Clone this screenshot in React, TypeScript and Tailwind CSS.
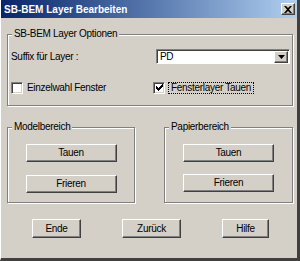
import React from 'react';

const raised =
    'border border-t-white border-l-white border-r-[#404040] border-b-[#404040] shadow-[inset_-1px_-1px_0_#808080,inset_1px_1px_0_#d4d0c8] bg-[#d4d0c8]';

function WinButton({ label, className }: { label: string; className: string }) {
    return (
        <button className={`${raised} ${className} flex items-center justify-center text-black leading-none`}>
            {label}
        </button>
    );
}

function CheckBox({ checked }: { checked?: boolean }) {
    return (
        <span className="w-[12px] h-[12px] bg-white border border-t-[#808080] border-l-[#808080] border-b-white border-r-white shadow-[inset_1px_1px_0_#404040,inset_-1px_-1px_0_#d4d0c8] flex items-center justify-center shrink-0">
            {checked && (
                <svg width="7" height="7" viewBox="0 0 7 7">
                    <path d="M0 2h1v1h1v1h1V3h1V2h1V1h1V0h1v3H6v1H5v1H4v1H3v1H2V6H1V5H0z" fill="#000" />
                </svg>
            )}
        </span>
    );
}

function Group({ title, className, children }: { title: string; className: string; children: React.ReactNode }) {
    return (
        <fieldset className={`border border-[#808080] shadow-[inset_1px_1px_0_#fff,1px_1px_0_#fff] ${className}`}>
            <legend className="ml-[4px] px-[2px] bg-[#d4d0c8] leading-[12px]">{title}</legend>
            {children}
        </fieldset>
    );
}

export default function App() {
    return (
        <div className="w-[300px] h-[261px] bg-[#d4d0c8] flex flex-col text-[10px] tracking-[-0.3px] text-black font-['Liberation_Sans',Arial,sans-serif] border-l border-l-white border-r-[3px] border-r-[#404040] border-b-[3px] border-b-[#404040]">
            <div className="h-[18px] bg-linear-to-r from-[#0a246a] to-[#b0cff0] flex items-center justify-between shrink-0">
                <span className="pl-[3px] text-white font-bold tracking-normal">SB-BEM Layer Bearbeiten</span>
                <span className={`${raised} w-[14px] h-[12px] mr-[2px] flex items-center justify-center`}>
                    <svg width="8" height="7" viewBox="0 0 8 7">
                        <path d="M0 0h2l2 2 2-2h2L5 3.5 8 7H6L4 5 2 7H0l3-3.5z" fill="#000" />
                    </svg>
                </span>
            </div>

            <div className="flex flex-col pl-[6px] pr-[4px]">
                <Group title="SB-BEM Layer Optionen" className="mt-[10px] pb-[10px]">
                    <div className="flex items-center mt-[9px] pl-[3px] pr-[2px]">
                        <span>Suffix für Layer :</span>
                        <div className="ml-auto w-[134px] h-[15px] bg-white border border-t-[#808080] border-l-[#808080] border-b-white border-r-white shadow-[inset_1px_1px_0_#404040] flex items-center">
                            <span className="pl-[3px] flex-1">PD</span>
                            <span className={`${raised} w-[14px] h-[12px] mr-[1px] flex items-center justify-center`}>
                                <svg width="7" height="4" viewBox="0 0 7 4">
                                    <path d="M0 0h7L3.5 4z" fill="#000" />
                                </svg>
                            </span>
                        </div>
                    </div>
                    <div className="flex items-center mt-[16px] pl-[3px]">
                        <div className="flex items-center gap-[4px] w-[142px]">
                            <CheckBox />
                            <span>Einzelwahl Fenster</span>
                        </div>
                        <div className="flex items-center gap-[3px]">
                            <CheckBox checked />
                            <span className="border border-dotted border-black px-[2px] leading-[10px]">Fensterlayer Tauen</span>
                        </div>
                    </div>
                </Group>

                <div className="flex justify-between mt-[15px]">
                    <Group title="Modelbereich" className="w-[128px] pb-[9px] flex flex-col">
                        <div className="flex flex-col items-center gap-[13px] mt-[11px]">
                            <WinButton label="Tauen" className="w-[91px] h-[18px]" />
                            <WinButton label="Frieren" className="w-[91px] h-[18px]" />
                        </div>
                    </Group>
                    <Group title="Papierbereich" className="w-[129px] pb-[9px] flex flex-col">
                        <div className="flex flex-col items-center gap-[12px] mt-[11px]">
                            <WinButton label="Tauen" className="w-[91px] h-[18px]" />
                            <WinButton label="Frieren" className="w-[91px] h-[18px]" />
                        </div>
                    </Group>
                </div>

                <div className="flex mt-[16px] pl-[25px]">
                    <WinButton label="Ende" className="w-[49px] h-[19px]" />
                    <WinButton label="Zurück" className="w-[59px] h-[19px] ml-[41px]" />
                    <WinButton label="Hilfe" className="w-[47px] h-[19px] ml-[41px]" />
                </div>
            </div>
        </div>
    );
}
